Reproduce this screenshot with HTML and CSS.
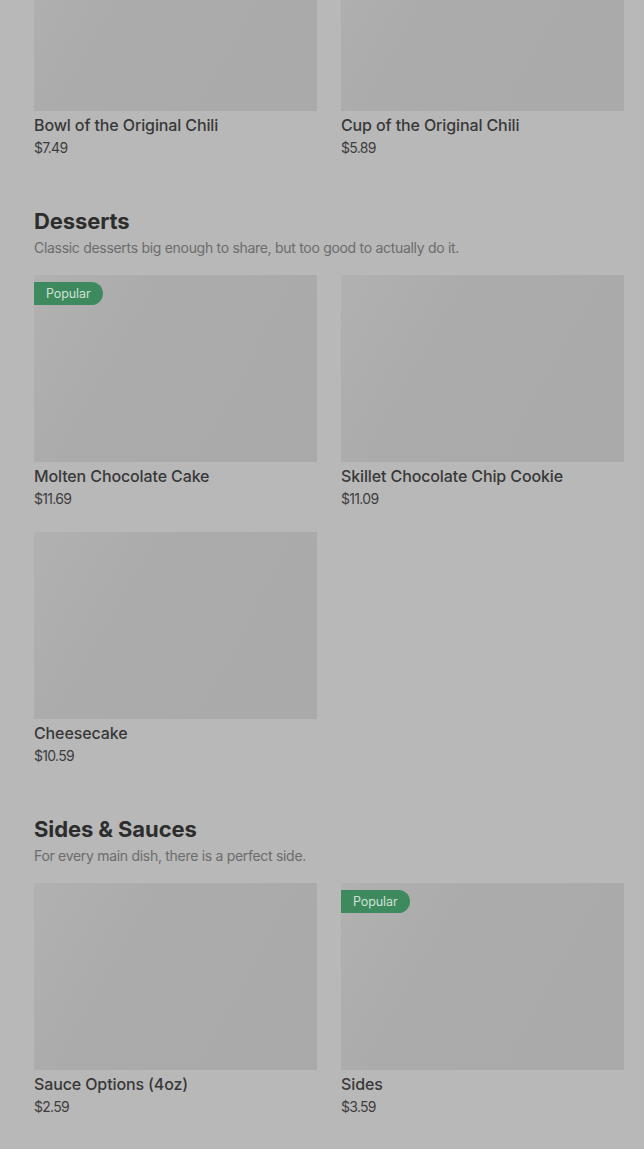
FILE: index.html
```html
<!DOCTYPE html>
<html>
<head>
<meta charset="utf-8">
<link rel="stylesheet" href="styles.css">
</head>
<body>
<main class="menu">
  <section class="section">
    <div class="grid">
      <div class="card">
        <div class="thumb"></div>
        <div class="name">Bowl of the Original Chili</div>
        <div class="price">$7.49</div>
      </div>
      <div class="card">
        <div class="thumb"></div>
        <div class="name">Cup of the Original Chili</div>
        <div class="price">$5.89</div>
      </div>
    </div>
  </section>
  <section class="section">
    <h2 class="title">Desserts</h2>
    <p class="desc">Classic desserts big enough to share, but too good to actually do it.</p>
    <div class="grid">
      <div class="card">
        <div class="thumb"><span class="badge">Popular</span></div>
        <div class="name">Molten Chocolate Cake</div>
        <div class="price">$11.69</div>
      </div>
      <div class="card">
        <div class="thumb"></div>
        <div class="name">Skillet Chocolate Chip Cookie</div>
        <div class="price">$11.09</div>
      </div>
      <div class="card">
        <div class="thumb"></div>
        <div class="name">Cheesecake</div>
        <div class="price">$10.59</div>
      </div>
    </div>
  </section>
  <section class="section">
    <h2 class="title">Sides &amp; Sauces</h2>
    <p class="desc">For every main dish, there is a perfect side.</p>
    <div class="grid">
      <div class="card">
        <div class="thumb"></div>
        <div class="name">Sauce Options (4oz)</div>
        <div class="price">$2.59</div>
      </div>
      <div class="card">
        <div class="thumb"><span class="badge">Popular</span></div>
        <div class="name">Sides</div>
        <div class="price">$3.59</div>
      </div>
    </div>
  </section>
</main>
</body>
</html>
```
FILE: styles.css
```css
html, body {
  margin: 0;
  padding: 0;
  background: #b8b8b8;
}
body {
  font-family: Inter, "Liberation Sans", sans-serif;
  color: #333;
  height: 1149px;
  overflow: hidden;
}
.menu {
  margin-top: -76px;
  padding: 0 20px 0 34px;
}
.section {
  padding-bottom: 48px;
}
.title {
  margin: 0;
  font-size: 22px;
  line-height: 28px;
  font-weight: 700;
  color: #2d2d2d;
  letter-spacing: -0.1px;
}
.desc {
  margin: 3px 0 17px;
  font-size: 14px;
  line-height: 20px;
  color: #6c6c6c;
  letter-spacing: -0.3px;
}
.grid {
  display: grid;
  grid-template-columns: 283px 283px;
  column-gap: 24px;
  row-gap: 22px;
}
.thumb {
  position: relative;
  height: 187px;
  background: linear-gradient(120deg, #b1b1b1 0%, #ababab 35%, #aaaaaa 100%);
}
.badge {
  position: absolute;
  left: 0;
  top: 7px;
  height: 23px;
  padding: 0 12px 0 12px;
  border-radius: 0 12px 12px 0;
  background: #3c8a5e;
  color: #d2e0d6;
  font-size: 12.5px;
  line-height: 23px;
  letter-spacing: -0.1px;
}
.name {
  margin-top: 2px;
  font-size: 16px;
  line-height: 24px;
  font-weight: 500;
  color: #383838;
  letter-spacing: -0.12px;
}
.price {
  font-size: 14px;
  line-height: 22px;
  color: #3e3e3e;
  letter-spacing: -0.7px;
}
```
